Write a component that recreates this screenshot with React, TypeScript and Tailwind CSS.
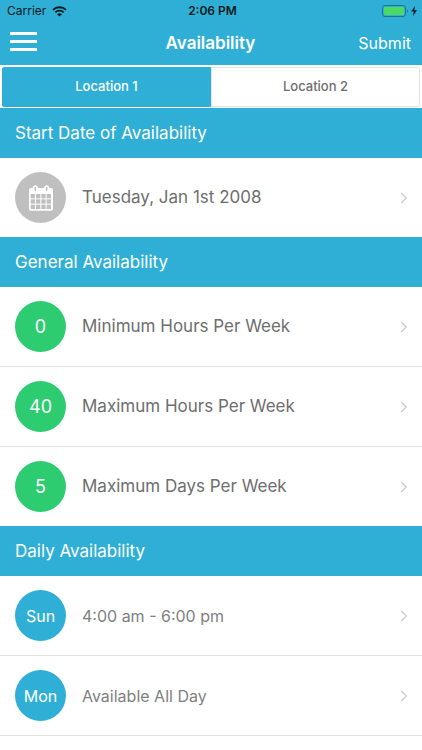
import { useState } from 'react';

interface RowProps {
  badge: React.ReactNode;
  badgeColor: string;
  label: string;
  labelStyle?: string;
}

const CalendarIcon = () => (
  <svg width="24" height="26" viewBox="0 0 72 78" aria-hidden="true">
    <rect x="0" y="9" width="72" height="68" rx="5" fill="#fff" />
    <g fill="#bfbfbf">
      {[27, 43, 59].map((y) =>
        [5, 21, 37, 53].map((x) => <rect key={`${x}-${y}`} x={x} y={y} width="13" height="13" />),
      )}
    </g>
    {/* binder rings */}
    <g fill="#bfbfbf" stroke="#fff" strokeWidth="5">
      <rect x="14" y="3" width="10" height="18" rx="5" />
      <rect x="48" y="3" width="10" height="18" rx="5" />
    </g>
  </svg>
);

const WifiIcon = () => (
  <svg width="15" height="11" viewBox="0 0 15 11" fill="none" stroke="#0b1a20" aria-hidden="true">
    <path d="M1 3.9C4.6 0.4 10.4 0.4 14 3.9" strokeWidth="2" />
    <path d="M3.3 6.4C5.6 4.1 9.4 4.1 11.7 6.4" strokeWidth="1.8" />
    <path d="M7.5 10.6L5.1 8.2C6.4 7 8.6 7 9.9 8.2Z" fill="#0b1a20" stroke="none" />
  </svg>
);

const BatteryIcon = () => (
  <svg width="36" height="12" viewBox="0 0 36 12" aria-hidden="true">
    <rect x="0.5" y="0.5" width="23" height="11" rx="2.5" fill="none" stroke="#1f7590" />
    <rect x="2" y="2" width="20" height="8" rx="1" fill="#4cd964" />
    <path d="M25 4.2C26.2 4.6 26.2 7.4 25 7.8Z" fill="#1f7590" />
    <path d="M33 1L29.2 6.6H31.8L31 11L35 5.2H32.3Z" fill="#0b1a20" />
  </svg>
);

const Chevron = () => (
  <svg width="8" height="12" viewBox="0 0 8 12" fill="none" aria-hidden="true">
    <path d="M1.2 1L6.2 6L1.2 11" stroke="#cfcfd3" strokeWidth="1.5" />
  </svg>
);

const SectionTitle = ({ children }: { children: string }) => (
  <h2 className="flex h-[50px] items-center bg-[#30afd6] px-[15px] pt-[2px] text-[17px] text-white">
    {children}
  </h2>
);

const Row = ({ badge, badgeColor, label, labelStyle = 'text-[17px] text-[#6e6e6e]' }: RowProps) => (
  <li>
    <button type="button" className="flex h-[79px] w-full items-center pr-[14px] pl-[15px] text-left">
      <span
        className={`flex size-[51px] shrink-0 items-center justify-center rounded-full text-white ${badgeColor}`}
      >
        {badge}
      </span>
      <span className={`ml-4 flex-1 ${labelStyle}`}>{label}</span>
      <Chevron />
    </button>
  </li>
);

const hourLimits = [
  { value: '0', label: 'Minimum Hours Per Week' },
  { value: '40', label: 'Maximum Hours Per Week' },
  { value: '5', label: 'Maximum Days Per Week' },
];

const days = [
  { day: 'Sun', hours: '4:00 am - 6:00 pm' },
  { day: 'Mon', hours: 'Available All Day' },
];

const locations = ['Location 1', 'Location 2'];

const App = () => {
  const [active, setActive] = useState(0);

  return (
    <div className="min-h-screen bg-white font-['Inter',sans-serif]">
      <header className="bg-[#30afd6]">
        <div className="grid h-[22px] grid-cols-3 items-center pr-1 pl-[7px] text-xs text-[#0b1a20]">
          <span className="flex items-center gap-[6px]">
            Carrier
            <WifiIcon />
          </span>
          <span className="text-center font-semibold">2:06 PM</span>
          <span className="flex justify-end">
            <BatteryIcon />
          </span>
        </div>
        <div className="grid h-[43px] grid-cols-3 items-center pr-[11px] pl-[10px] text-white">
          <button type="button" aria-label="Menu" className="flex w-[27px] flex-col gap-[5px] pb-1">
            <span className="h-[3px] bg-white" />
            <span className="h-[3px] bg-white" />
            <span className="h-[3px] bg-white" />
          </button>
          <h1 className="text-center text-[17px] font-semibold">Availability</h1>
          <button type="button" className="pb-[2px] text-right text-base">
            Submit
          </button>
        </div>
      </header>

      <div className="flex h-[43px] px-[2px] pt-[2px] pb-px">
        {locations.map((name, i) => (
          <button
            key={name}
            type="button"
            aria-pressed={active === i}
            onClick={() => setActive(i)}
            className={`flex-1 border text-[13px] font-medium first:rounded-l-xs last:rounded-r-xs ${
              active === i
                ? 'border-[#30afd6] bg-[#30afd6] text-white'
                : 'border-[#e0e3e8] bg-white text-[#6e6e6e]'
            }`}
          >
            {name}
          </button>
        ))}
      </div>

      <SectionTitle>Start Date of Availability</SectionTitle>
      <ul>
        <Row badge={<CalendarIcon />} badgeColor="bg-[#bfbfbf]" label="Tuesday, Jan 1st 2008" />
      </ul>

      <SectionTitle>General Availability</SectionTitle>
      <ul className="divide-y divide-[#e2e2e4]">
        {hourLimits.map(({ value, label }) => (
          <Row
            key={label}
            badge={<span className="text-lg">{value}</span>}
            badgeColor="bg-[#2ecc71]"
            label={label}
          />
        ))}
      </ul>

      <SectionTitle>Daily Availability</SectionTitle>
      <ul className="divide-y divide-[#e2e2e4] border-b border-[#e2e2e4]">
        {days.map(({ day, hours }) => (
          <Row
            key={day}
            badge={<span className="text-base">{day}</span>}
            badgeColor="bg-[#30afd6]"
            label={hours}
            labelStyle="text-base text-[#808080]"
          />
        ))}
      </ul>
    </div>
  );
};

export default App;
